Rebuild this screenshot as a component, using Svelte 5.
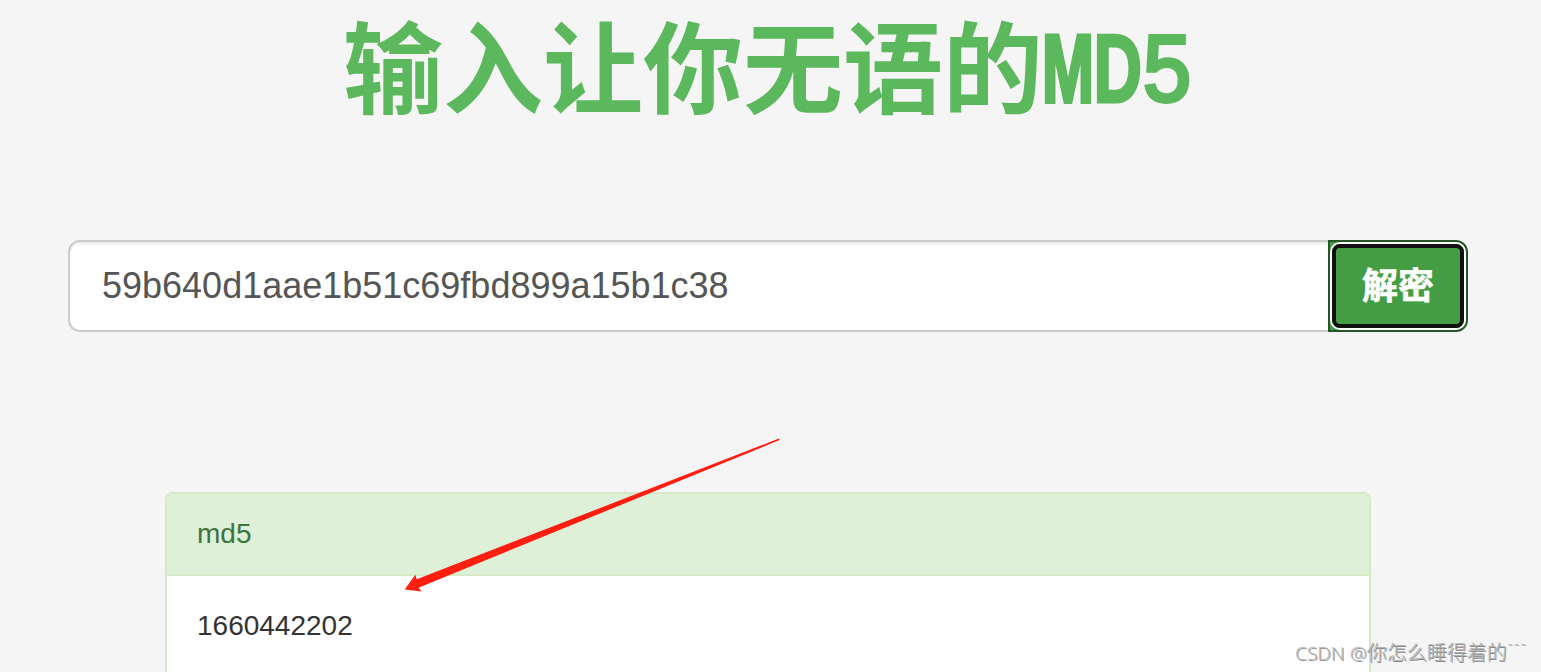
<script lang="ts">
  let hash = $state('59b640d1aae1b51c69fbd899a15b1c38');
  let result = $state('1660442202');
</script>

<div class="page">
  <h1>
    <span class="title-cn">输入让你无语的</span>
    <span class="half"><span class="glyph m">M</span></span>
    <span class="half"><span class="glyph d">D</span></span>
    <span class="half"><span class="glyph five">5</span></span>
  </h1>

  <form class="input-group" onsubmit={(e) => e.preventDefault()}>
    <input type="text" class="form-control" bind:value={hash} spellcheck="false" />
    <button type="submit" class="btn"><span>解密</span></button>
  </form>

  <div class="panel">
    <div class="panel-heading">md5</div>
    <div class="panel-body">{result}</div>
  </div>

  <svg class="arrow" viewBox="0 0 376 154" width="376" height="154">
    <path d="M374.8 0.6 L12.7 141.3 L11.3 136.8 L0.7 151.6 L17.6 153.4 L14.6 149.7 L375.6 2 Z" fill="#ff1e10" />
  </svg>

  <div class="watermark"><span class="latin">CSDN @</span>你怎么睡得着的<span class="ticks">```</span></div>
</div>

<style>
  :global(body) {
    margin: 0;
    background: #f5f5f5;
  }
  .page {
    position: relative;
    box-sizing: border-box;
    height: 672px;
    overflow: hidden;
    padding-right: 5px;
    display: flex;
    flex-direction: column;
    align-items: center;
    background: #f5f5f5;
    font-family: "Liberation Sans", "Noto Sans CJK SC", sans-serif;
    color: #333;
  }
  h1 {
    display: flex;
    flex: none;
    align-items: baseline;
    margin: 0;
    height: 240px;
    font-size: 100px;
    line-height: 126px;
    font-weight: 700;
    color: #5cb85c;
    white-space: nowrap;
  }
  .title-cn {
    font-family: "Noto Sans CJK SC", sans-serif;
  }
  /* latin letters take half of a full-width cell */
  .half {
    display: flex;
    justify-content: center;
    width: 50px;
  }
  .glyph {
    display: block;
    flex: none;
    font-size: 96px;
  }
  .m {
    transform: translateY(-4px) scaleX(0.65);
    -webkit-text-stroke: 4px #5cb85c;
  }
  .d {
    transform: translateY(-4px) scaleX(0.7);
    -webkit-text-stroke: 3px #5cb85c;
  }
  .five {
    font-size: 94px;
    font-weight: 400;
    transform: translate(-1px, -5px) scaleX(0.92);
    -webkit-text-stroke: 4px #5cb85c;
  }
  .input-group {
    display: flex;
    flex: none;
    width: 1400px;
    height: 92px;
  }
  .form-control {
    box-sizing: border-box;
    flex: 1;
    min-width: 0;
    padding: 12px 32px;
    border: 2px solid #ccc;
    border-right: 0;
    border-radius: 12px 0 0 12px;
    background: #fff;
    box-shadow: inset 0 2px 2px rgba(0, 0, 0, 0.075);
    font-family: inherit;
    font-size: 36px;
    color: #555;
    outline: none;
  }
  .btn {
    position: relative;
    box-sizing: border-box;
    width: 140px;
    padding: 0 0 6px;
    border: 2px solid #255625;
    border-radius: 0 12px 12px 0;
    background: #449d44;
    font-family: "Noto Sans CJK SC", sans-serif;
    font-size: 36px;
    font-weight: 700;
    line-height: 60px;
    color: #fff;
    -webkit-text-stroke: 0.6px #fff;
  }
  /* double focus ring, white outside and black inside */
  .btn::before {
    content: "";
    position: absolute;
    inset: 0;
    border: 2px solid #fff;
    border-radius: 10px;
  }
  .btn::after {
    content: "";
    position: absolute;
    inset: 2px;
    border: 4px solid #101010;
    border-radius: 8px;
  }
  .panel {
    box-sizing: border-box;
    flex: none;
    width: 1206px;
    margin-top: 160px;
    border: 2px solid #d6e9c6;
    border-radius: 8px;
    background: #fff;
    font-size: 28px;
    line-height: 40px;
  }
  .panel-heading {
    padding: 20px 30px;
    border-bottom: 2px solid #d6e9c6;
    border-radius: 6px 6px 0 0;
    background: #dff0d8;
    color: #3c763d;
  }
  .panel-body {
    padding: 30px;
    height: 120px;
  }
  .arrow {
    position: absolute;
    left: 404px;
    top: 438px;
  }
  .watermark {
    position: absolute;
    left: 1295px;
    top: 637px;
    font-family: "Noto Sans CJK SC", sans-serif;
    font-size: 20px;
    font-weight: 300;
    line-height: 30px;
    color: #b4b4b4;
    text-shadow: 1px 1px 0 #888;
    white-space: nowrap;
  }
  .latin {
    font-family: "Open Sans", "Noto Sans", sans-serif;
    font-size: 19px;
    letter-spacing: 0.1px;
  }
  .ticks {
    display: inline-block;
    font-family: "Liberation Sans", sans-serif;
    transform: translateY(-4px) scaleY(0.5);
  }
</style>
